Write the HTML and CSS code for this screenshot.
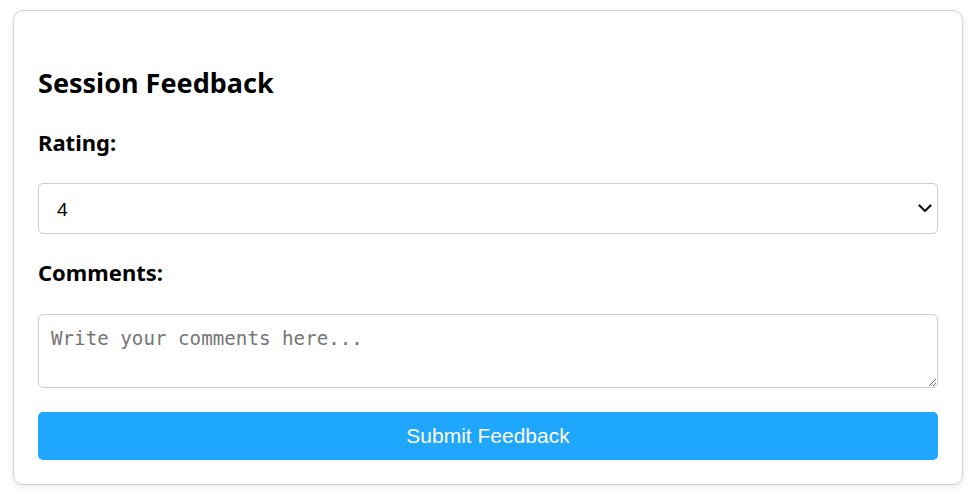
FILE: index.html
```html
<!DOCTYPE html>
<html lang="en">
<head>
<meta charset="utf-8">
<title>Session Feedback</title>
<link rel="stylesheet" href="styles.css">
</head>
<body>
<div class="card">
  <h2 class="title">Session Feedback</h2>
  <form class="form">
    <label class="label" for="rating">Rating:</label>
    <div class="select-wrap">
      <select class="select" id="rating">
        <option>1</option>
        <option>2</option>
        <option>3</option>
        <option selected>4</option>
        <option>5</option>
      </select>
      <svg class="chevron" width="14" height="9" viewBox="0 0 14 9" aria-hidden="true">
        <path d="M1.5 1.5 L7 7 L12.5 1.5" fill="none" stroke="#111" stroke-width="2.2" stroke-linecap="round" stroke-linejoin="round"/>
      </svg>
    </div>
    <label class="label label-comments" for="comments">Comments:</label>
    <textarea class="textarea" id="comments" placeholder="Write your comments here..."></textarea>
    <button class="button" type="button">Submit Feedback</button>
  </form>
</div>
</body>
</html>
```
FILE: styles.css
```css
html, body {
  margin: 0;
  background: #ffffff;
}
body {
  padding: 10px 14px 10px 13px;
  font-family: "Noto Sans", "Lato", sans-serif;
  color: #000;
}
.card {
  border: 1px solid #d2d2d2;
  border-radius: 10px;
  padding: 24px;
  box-shadow: 0 2px 7px rgba(0, 0, 0, 0.09);
}
.title {
  margin: 32px 0 0;
  font-size: 27px;
  font-weight: 700;
  line-height: 32px;
}
.form {
  display: flex;
  flex-direction: column;
}
.label {
  display: block;
  margin: 30px 0 28px;
  font-size: 22px;
  font-weight: 700;
  line-height: 26px;
}
.label-comments {
  margin-top: 25px;
  margin-bottom: 29px;
}
.select-wrap {
  position: relative;
  display: flex;
}
.select {
  flex: 1;
  height: 51px;
  padding: 0 18px;
  margin: 0;
  font-family: "Noto Sans", "Lato", sans-serif;
  font-size: 18.5px;
  color: #000;
  background: #fff;
  border: 1px solid #cccccc;
  border-radius: 5px;
  -webkit-appearance: none;
  appearance: none;
}
.chevron {
  position: absolute;
  right: 6px;
  top: 21px;
  pointer-events: none;
}
.textarea {
  box-sizing: border-box;
  height: 74px;
  padding: 12px;
  margin: 0;
  font-family: "DejaVu Sans Mono", "Liberation Mono", monospace;
  font-size: 19.2px;
  border: 1px solid #cccccc;
  border-radius: 5px;
  resize: vertical;
}
.textarea::placeholder {
  color: #757575;
}
.button {
  margin-top: 24px;
  height: 48px;
  border: none;
  border-radius: 5px;
  background: #1fa7fd;
  color: #ffffff;
  font-family: "Liberation Sans", Arial, sans-serif;
  font-size: 21px;
  cursor: pointer;
}
```
